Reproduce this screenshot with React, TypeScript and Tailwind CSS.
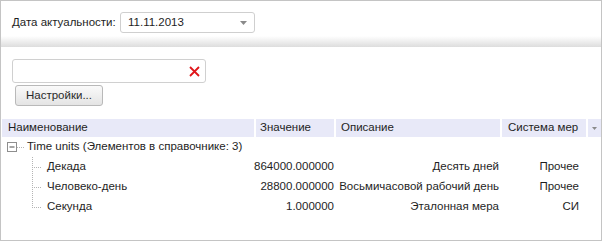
const font = { fontFamily: '"Liberation Sans", Arial, sans-serif' }

type Item = { name: string; value: string; desc: string; system: string }

const items: Item[] = [
  { name: 'Декада', value: '864000.000000', desc: 'Десять дней', system: 'Прочее' },
  { name: 'Человеко-день', value: '28800.000000', desc: 'Восьмичасовой рабочий день', system: 'Прочее' },
  { name: 'Секунда', value: '1.000000', desc: 'Эталонная мера', system: 'СИ' },
]

function Branch({ last }: { last: boolean }) {
  return (
    <svg width="44" height="20" className="shrink-0">
      <line x1="30.5" y1="0" x2="30.5" y2={last ? 10.5 : 20} stroke="#b4b4b4" strokeDasharray="1 1" />
      <line x1="30" y1="10.5" x2="40" y2="10.5" stroke="#b4b4b4" strokeDasharray="1 1" />
    </svg>
  )
}

export default function App() {
  return (
    <div style={font} className="h-[241px] w-[602px] whitespace-nowrap border border-[#c4c4c4] bg-white text-[11.5px] text-[#1e1e1e]">
      <div className="h-[46px] bg-[linear-gradient(to_bottom,#ffffff_0px,#ffffff_35px,#dddddd_46px)] pl-[11px] pt-[11px]">
        <div className="flex items-center">
          <span className="w-[108px]">Дата актуальности:</span>
          <div className="flex h-[21px] w-[135px] items-center justify-between rounded-[3px] border border-[#cfcfcf] bg-white pl-[7px] pr-[7px]">
            <span>11.11.2013</span>
            <svg width="7" height="4" viewBox="0 0 7 4">
              <path d="M0 0h7L3.5 4z" fill="#8a8a8a" />
            </svg>
          </div>
        </div>
      </div>

      <div className="pl-[11px] pt-[12px]">
        <div className="flex h-[24px] w-[194px] items-center justify-end rounded-[3px] border border-[#d0d0d0] pr-[5px]">
          <svg width="11" height="11" viewBox="0 0 11 11">
            <path d="M1 1l9 9M10 1l-9 9" stroke="#e0161b" strokeWidth="1.8" />
          </svg>
        </div>
        <button
          type="button"
          className="ml-[3px] mt-[2px] h-[21px] w-[88px] rounded-[3px] border border-[#b9b9b9] bg-[linear-gradient(to_bottom,#fafafa,#e4e4e4)] text-[11.5px] text-[#2a2a2a]"
        >
          Настройки...
        </button>
      </div>

      <div className="mt-[13px] flex h-[18px] items-center gap-[2px] pl-[1px]">
        <div className="flex h-full w-[252px] items-center bg-[#e8e9f8] pl-[6px]">Наименование</div>
        <div className="flex h-full w-[78px] items-center bg-[#e8e9f8] pl-[4px]">Значение</div>
        <div className="flex h-full w-[164px] items-center bg-[#e8e9f8] pl-[5px]">Описание</div>
        <div className="flex h-full w-[84px] items-center bg-[#e8e9f8] pl-[6px]">Система мер</div>
        <div className="flex h-full w-[13px] items-center justify-center bg-[#e8e9f8]">
          <svg width="5" height="3" viewBox="0 0 5 3">
            <path d="M0 0h5L2.5 3z" fill="#8a8a8a" />
          </svg>
        </div>
      </div>

      <div className="flex h-[20px] items-center pl-[6px]">
        <svg width="20" height="20" className="shrink-0">
          <rect x="0.5" y="5.5" width="9" height="9" fill="#fff" stroke="#8e8e8e" />
          <line x1="2.5" y1="10" x2="7.5" y2="10" stroke="#4a4a4a" />
          <line x1="10" y1="10.5" x2="18" y2="10.5" stroke="#b4b4b4" strokeDasharray="1 1" />
        </svg>
        <span>Time units (Элементов в справочнике: 3)</span>
      </div>

      {items.map((item, i) => (
        <div key={item.name} className="flex h-[20px] items-center pl-[1px]">
          <div className="flex w-[248px] shrink-0 items-center">
            <Branch last={i === items.length - 1} />
            <span className="pl-[1px]">{item.name}</span>
          </div>
          <div className="w-[84px] shrink-0 text-right">{item.value}</div>
          <div className="w-[165px] shrink-0 text-right">{item.desc}</div>
          <div className="w-[80px] shrink-0 text-right">{item.system}</div>
        </div>
      ))}
    </div>
  )
}
